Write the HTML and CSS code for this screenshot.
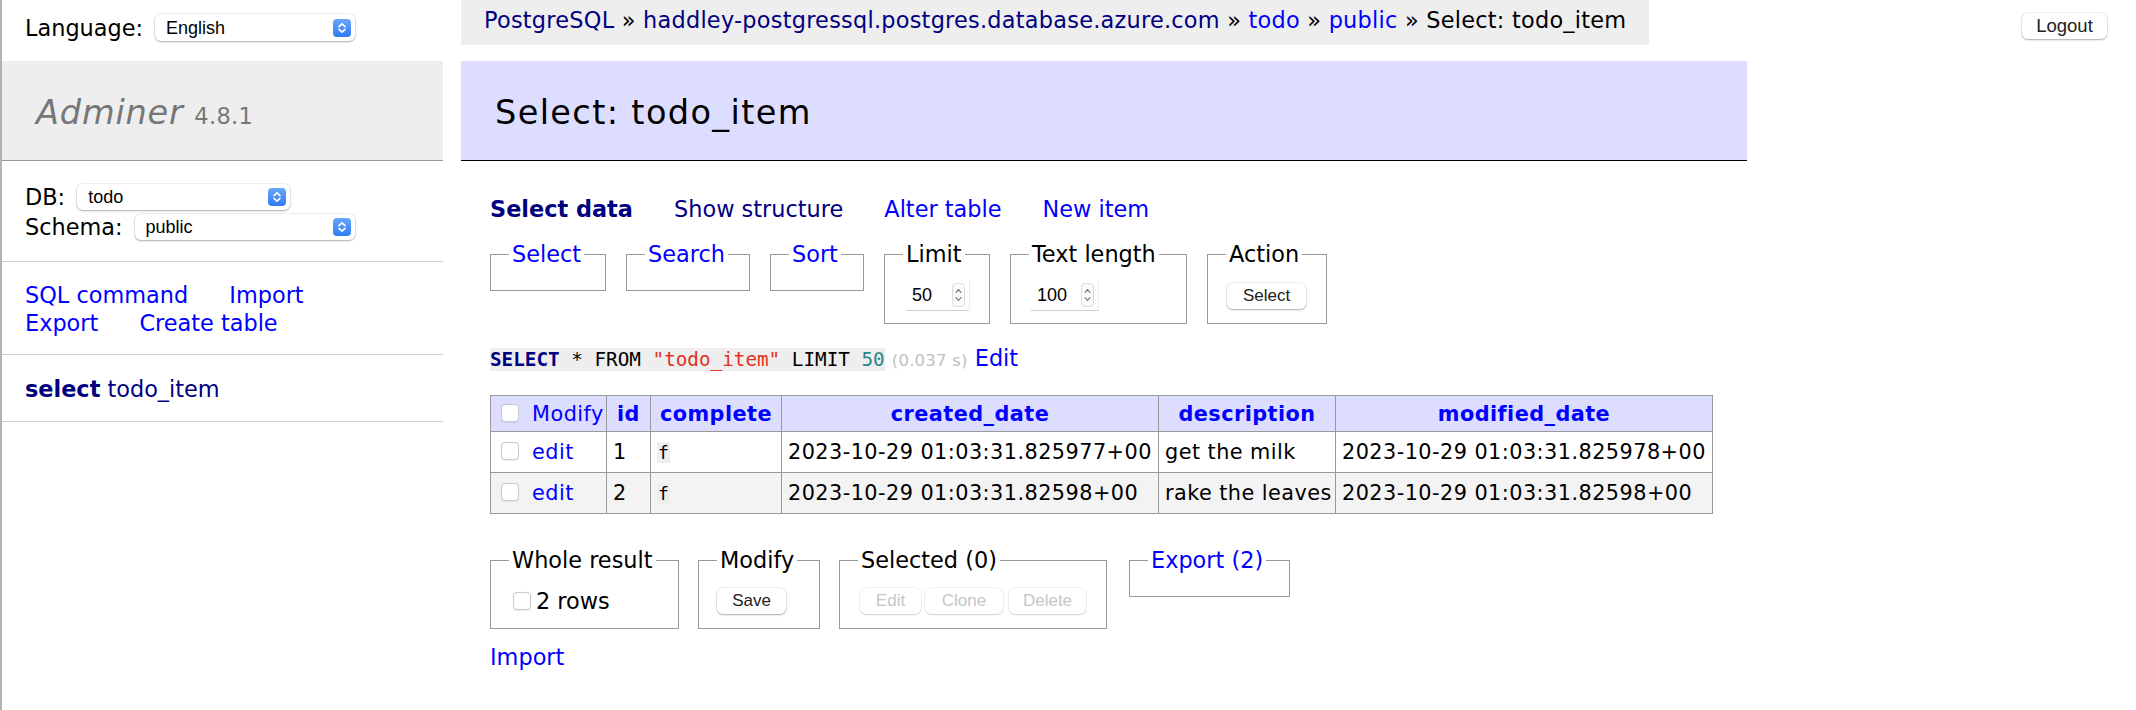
FILE: index.html
```html
<!DOCTYPE html>
<html lang="en">
<head>
<meta charset="utf-8">
<title>Select: todo_item - Adminer</title>
<link rel="stylesheet" href="styles.css">
</head>
<body>
<div class="page">
  <aside class="menu">
    <div class="lang">Language:<span class="sel sel-lang">English<span class="stepper"><svg width="18" height="18" viewBox="0 0 18 18"><path d="M6 7.6 9 4.8 12 7.6M6 10.4 9 13.2 12 10.4" fill="none" stroke="#fff" stroke-width="1.6" stroke-linecap="round" stroke-linejoin="round"/></svg></span></span></div>
    <h1><a class="brand" href="#">Adminer</a> <span class="version">4.8.1</span></h1>
    <div class="dbs">
      <div class="dbrow">DB:<span class="sel sel-db">todo<span class="stepper"><svg width="18" height="18" viewBox="0 0 18 18"><path d="M6 7.6 9 4.8 12 7.6M6 10.4 9 13.2 12 10.4" fill="none" stroke="#fff" stroke-width="1.6" stroke-linecap="round" stroke-linejoin="round"/></svg></span></span></div>
      <div class="dbrow">Schema:<span class="sel sel-schema">public<span class="stepper"><svg width="18" height="18" viewBox="0 0 18 18"><path d="M6 7.6 9 4.8 12 7.6M6 10.4 9 13.2 12 10.4" fill="none" stroke="#fff" stroke-width="1.6" stroke-linecap="round" stroke-linejoin="round"/></svg></span></span></div>
    </div>
    <p class="mlinks"><a href="#">SQL command</a> <a href="#">Import</a><br><a href="#">Export</a> <a href="#">Create table</a></p>
    <p class="tables"><a class="v bold" href="#">select</a> <a class="v" href="#">todo_item</a></p>
  </aside>

  <main class="main">
    <div class="topbar">
      <div class="breadcrumb"><a class="v" href="#">PostgreSQL</a> » <a class="v" href="#">haddley-postgressql.postgres.database.azure.com</a> » <a href="#">todo</a> » <a href="#">public</a> » Select: todo_item</div>
      <button class="btn logout" type="button">Logout</button>
    </div>

    <div class="content">
      <h2>Select: todo_item</h2>
      <div class="inner">
        <p class="tabs"><a class="v bold" href="#">Select data</a> <a class="v" href="#">Show structure</a> <a href="#">Alter table</a> <a href="#">New item</a></p>

        <div class="controls">
          <fieldset class="fs-select"><legend><a href="#">Select</a></legend></fieldset>
          <fieldset class="fs-search"><legend><a href="#">Search</a></legend></fieldset>
          <fieldset class="fs-sort"><legend><a href="#">Sort</a></legend></fieldset>
          <fieldset class="fs-limit"><legend>Limit</legend>
            <div class="fc"><span class="numin w-limit">50<span class="spin"><svg width="11" height="22" viewBox="0 0 11 22"><path d="M3 8.5 5.5 5.5 8 8.5M3 13.5 5.5 16.5 8 13.5" fill="none" stroke="#666" stroke-width="1.1" stroke-linecap="round" stroke-linejoin="round"/></svg></span></span></div>
          </fieldset>
          <fieldset class="fs-len"><legend>Text length</legend>
            <div class="fc"><span class="numin w-len">100<span class="spin"><svg width="11" height="22" viewBox="0 0 11 22"><path d="M3 8.5 5.5 5.5 8 8.5M3 13.5 5.5 16.5 8 13.5" fill="none" stroke="#666" stroke-width="1.1" stroke-linecap="round" stroke-linejoin="round"/></svg></span></span></div>
          </fieldset>
          <fieldset class="fs-action"><legend>Action</legend>
            <div class="fc"><button class="btn b-select" type="button">Select</button></div>
          </fieldset>
        </div>

        <p class="query"><code><span class="kw">SELECT</span> * FROM <span class="str">"todo_item"</span> LIMIT <span class="num">50</span></code> <span class="time">(0.037 s)</span> <a href="#">Edit</a></p>

        <table class="data">
          <colgroup><col class="w1"><col class="w2"><col class="w3"><col class="w4"><col class="w5"><col class="w6"></colgroup>
          <thead>
            <tr><td><span class="cb"></span> <a href="#">Modify</a></td><th><a href="#">id</a></th><th><a href="#">complete</a></th><th><a href="#">created_date</a></th><th><a href="#">description</a></th><th><a href="#">modified_date</a></th></tr>
          </thead>
          <tbody>
            <tr><td><span class="cb"></span> <a href="#">edit</a></td><td>1</td><td><code class="f">f</code></td><td>2023-10-29 01:03:31.825977+00</td><td>get the milk</td><td>2023-10-29 01:03:31.825978+00</td></tr>
            <tr class="odd"><td><span class="cb"></span> <a href="#">edit</a></td><td>2</td><td><code class="f">f</code></td><td>2023-10-29 01:03:31.82598+00</td><td>rake the leaves</td><td>2023-10-29 01:03:31.82598+00</td></tr>
          </tbody>
        </table>

        <div class="footer">
          <fieldset class="fs-whole"><legend>Whole result</legend>
            <div class="fc2"><span class="cb cb-all"></span>2 rows</div>
          </fieldset>
          <fieldset class="fs-modify"><legend>Modify</legend>
            <div class="fc2"><button class="btn b-save" type="button">Save</button></div>
          </fieldset>
          <fieldset class="fs-selected"><legend>Selected (0)</legend>
            <div class="fc2"><button class="btn b-edit" type="button" disabled>Edit</button><button class="btn b-clone" type="button" disabled>Clone</button><button class="btn b-delete" type="button" disabled>Delete</button></div>
          </fieldset>
          <fieldset class="fs-export"><legend><a href="#">Export (2)</a></legend></fieldset>
        </div>

        <p class="import"><a href="#">Import</a></p>
      </div>
    </div>
  </main>
</div>
</body>
</html>
```

FILE: styles.css
```css
html, body {
  margin: 0;
  padding: 0;
}

body {
  font-family: "DejaVu Sans", Verdana, sans-serif;
  font-size: 22.4px;
  line-height: 28px;
  color: #000;
  background: #fff;
}

a {
  color: #00f;
  text-decoration: none;
}

a.v {
  color: #000080;
}

.bold {
  font-weight: bold;
}

.page {
  display: flex;
  min-height: 710px;
  border-left: 2px solid #b3b3b3;
}

/* ---------- sidebar ---------- */
.menu {
  width: 441px;
  flex: none;
}

.lang {
  height: 55px;
  margin-bottom: 6px;
  padding-left: 23px;
  display: flex;
  align-items: center;
}

.sel {
  margin-left: 12px;
  display: inline-flex;
  align-items: center;
  justify-content: space-between;
  box-sizing: border-box;
  height: 26px;
  padding: 0 4px 0 11px;
  background: #fff;
  border-radius: 6px;
  box-shadow: 0 0 0 1px rgba(0, 0, 0, 0.06), 0 1px 2px rgba(0, 0, 0, 0.28);
  font-family: "Liberation Sans", Arial, sans-serif;
  font-size: 18px;
  line-height: 1;
  color: #000;
}

.sel-lang { width: 200px; height: 27px; }
.sel-db { width: 213px; }
.sel-schema { width: 220px; }

.stepper {
  width: 18px;
  height: 18px;
  border-radius: 4px;
  background: linear-gradient(#6aa7fb, #2e7bf5);
  display: block;
}

.stepper svg {
  display: block;
}

h1 {
  margin: 0;
  height: 42px;
  padding: 31px 34px 26px;
  font-size: 33.6px;
  line-height: 42px;
  font-weight: normal;
  background: #eee;
  border-bottom: 1px solid #999;
  color: #777;
  white-space: nowrap;
}

h1 .brand {
  color: #777;
  font-style: italic;
  letter-spacing: 0.8px;
}

h1 .version {
  font-size: 22.5px;
  line-height: 1;
  color: #777;
  letter-spacing: 0.3px;
}

.dbs {
  padding: 21px 23px 19px;
  border-bottom: 1px solid #ccc;
}

.dbrow {
  height: 30px;
  display: flex;
  align-items: center;
}

.mlinks {
  margin: 0;
  padding: 19px 23px 17px;
  border-bottom: 1px solid #ccc;
}

.mlinks a {
  margin-right: 34px;
  white-space: nowrap;
}

.tables {
  margin: 0;
  padding: 20px 23px 18px;
  border-bottom: 1px solid #ccc;
}

/* ---------- main ---------- */
.main {
  flex: 1;
  min-width: 0;
  margin-left: 18px;
}

.topbar {
  display: flex;
  justify-content: space-between;
  align-items: flex-start;
  height: 45px;
}

.breadcrumb {
  background: #eee;
  height: 45px;
  line-height: 40px;
  padding: 0 23px;
  white-space: nowrap;
  letter-spacing: 0.25px;
}

.btn {
  box-sizing: border-box;
  height: 26px;
  padding: 0;
  margin: 0;
  font-family: "Liberation Sans", Arial, sans-serif;
  font-size: 17px;
  color: #222;
  background: #fff;
  border: 0;
  border-radius: 6px;
  box-shadow: 0 0 0 1px rgba(0, 0, 0, 0.06), 0 1px 2px rgba(0, 0, 0, 0.28);
}

.btn[disabled] {
  color: #c6c6c6;
  box-shadow: 0 0 0 1px rgba(0, 0, 0, 0.05), 0 1px 1.5px rgba(0, 0, 0, 0.12);
}

.logout {
  margin: 13px 29px 0 0;
  width: 85px;
  font-size: 18.5px;
}

.b-select { width: 79px; margin-left: 1px; }
.b-save { width: 69px; }
.b-edit { width: 61px; margin-left: 2px; margin-right: 4px; }
.b-clone { width: 78px; margin-right: 6px; }
.b-delete { width: 77px; }

.content {
  width: fit-content;
  margin-top: 16px;
}

h2 {
  margin: 0;
  padding: 31px 34px 26px;
  font-size: 33.6px;
  line-height: 42px;
  font-weight: normal;
  background: #ddf;
  border-bottom: 1px solid #000;
  letter-spacing: 1.35px;
}

.inner {
  padding: 0 34px 0 29px;
}

.tabs {
  margin: 34px 0 0;
  white-space: nowrap;
}

.tabs a {
  margin-right: 34px;
}

.controls,
.footer {
  display: flex;
  align-items: flex-start;
}

.controls {
  gap: 20px;
  margin-top: 17px;
}

.footer {
  gap: 19px;
  margin-top: 32px;
}

fieldset {
  box-sizing: border-box;
  flex: none;
  margin: 0;
  padding: 11px 18px;
  border: 1px solid #999;
}

legend {
  padding: 0 3px;
  line-height: 28px;
}

.fs-select { width: 116px; }
.fs-search { width: 124px; }
.fs-sort { width: 94px; }
.fs-limit { width: 106px; }
.fs-len { width: 177px; }
.fs-action { width: 120px; }
.fs-whole { width: 189px; }
.fs-modify { width: 122px; }
.fs-selected { width: 268px; }
.fs-export { width: 161px; margin-left: 3px; }

.fc {
  height: 33px;
  display: flex;
  align-items: center;
}

.fc2 {
  height: 32px;
  display: flex;
  align-items: center;
}

.numin {
  box-sizing: border-box;
  display: inline-flex;
  align-items: center;
  justify-content: space-between;
  height: 31px;
  margin-left: 3px;
  padding: 0 4px 0 6px;
  background: #fff;
  border-bottom: 1px solid #cfcfcf;
  box-shadow: 1px 0 0 #ececec;
  font-family: "Liberation Sans", Arial, sans-serif;
  font-size: 18px;
  color: #000;
}

.w-limit { width: 63px; }
.w-len { width: 67px; margin-left: 2px; }

.spin {
  display: block;
  width: 13px;
  height: 24px;
  box-sizing: border-box;
  border: 1px solid #dcdcdc;
  border-radius: 4px;
  background: #fbfbfb;
}

.spin svg {
  display: block;
}

.query {
  margin: 20px 0 0;
  white-space: nowrap;
}

code {
  font-family: "DejaVu Sans Mono", monospace;
  font-size: 19.3px;
  background: #eee;
}

.kw {
  color: #000080;
  font-weight: bold;
}

.str {
  color: #e2321f;
}

.num {
  color: #2c8787;
}

.time {
  color: #c0c0c0;
  font-size: 16.5px;
  letter-spacing: 0.2px;
}

/* ---------- table ---------- */
table.data {
  border-collapse: collapse;
  table-layout: fixed;
  width: 1222px;
  margin-top: 20px;
  font-size: 20.8px;
  line-height: 26px;
  letter-spacing: 0.45px;
  border-top: 1px solid #999;
  border-left: 1px solid #999;
}

.w1 { width: 116px; }
.w2 { width: 44px; }
.w3 { width: 131px; }
.w4 { width: 377px; }
.w5 { width: 177px; }
.w6 { width: 377px; }

.data td,
.data th {
  border: 0;
  border-right: 1px solid #999;
  border-bottom: 1px solid #999;
  padding: 0 6px;
  white-space: nowrap;
  overflow: hidden;
  text-align: left;
  vertical-align: middle;
}

.data thead td,
.data thead th {
  background: #ddf;
  height: 35px;
}

.data thead th {
  text-align: center;
  font-weight: bold;
}

.data tbody td {
  height: 40px;
}

.data tr.odd {
  background: #f3f3f3;
}

.cb {
  display: inline-block;
  box-sizing: border-box;
  width: 18px;
  height: 18px;
  margin: 0 6px 0 4px;
  vertical-align: middle;
  background: #fff;
  border: 1px solid #c9c9c9;
  border-radius: 4px;
  box-shadow: 0 0.5px 1px rgba(0, 0, 0, 0.08);
  position: relative;
  top: -2px;
}

.cb-all {
  margin: 0 5px 0 4px;
  top: 0;
}

code.f {
  font-size: 18px;
  padding: 0 1px;
  letter-spacing: 0;
}

.import {
  margin: 14px 0 0;
}
```
